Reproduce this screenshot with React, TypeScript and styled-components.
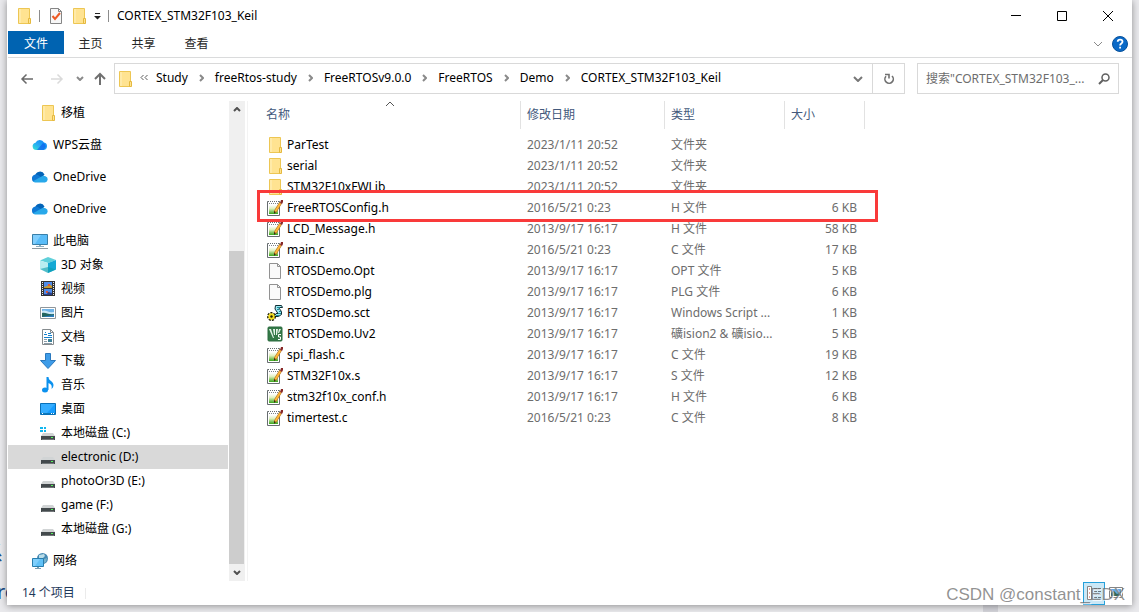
import React from "react";
import styled, { createGlobalStyle, css } from "styled-components";

const Global = createGlobalStyle`
  * { box-sizing: border-box; }
  body {
    margin: 0;
    background: #e9e9ec;
    font: 12px/20px "Noto Sans", "Noto Sans CJK SC", sans-serif;
    color: #000;
  }
  button, input { font: inherit; color: inherit; }
`;

const Desktop = styled.div`
  position: relative;
  min-height: 100vh;
  overflow: hidden;
  display: flex;
  flex-direction: column;
  padding: 0 7px 7px;
`;

const PageText = styled.span<{ $top: number; $left: number }>`
  position: absolute;
  top: ${(p) => p.$top}px;
  left: ${(p) => p.$left}px;
  font-size: 20px;
  line-height: 24px;
  color: #1b4d86;
`;

const PageBand = styled.span`
  position: absolute;
  right: 141px;
  bottom: 0;
  width: 15px;
  height: 20px;
  background: #d3d3d9;
`;

const Window = styled.main`
  position: relative;
  flex: 1;
  display: flex;
  flex-direction: column;
  background: #fff;
  border-left: 1px solid #fff;
  box-shadow: 0 1px 7px rgba(0, 0, 0, 0.4);
`;

const TitleBar = styled.header`
  display: flex;
  align-items: center;
  height: 31px;
  padding: 0 1px 0 8px;
`;

const QuickAccess = styled.div`
  display: flex;
  align-items: center;
  gap: 7px;
`;

const PlainButton = styled.button`
  display: flex;
  align-items: center;
  justify-content: center;
  padding: 0;
  border: 0;
  background: none;
`;

const Separator = styled.span`
  width: 1px;
  height: 12px;
  margin: 0 1px 0 0;
  background: #8c8c8c;
`;

const Title = styled.h1`
  margin: 0 0 0 7px;
  font-size: 12px;
  font-weight: 400;
`;

const Captions = styled.div`
  display: flex;
  margin-left: auto;
`;

const CaptionButton = styled(PlainButton)`
  width: 46px;
  height: 31px;
`;

const Ribbon = styled.nav`
  display: flex;
  align-items: flex-start;
  height: 27px;
  border-bottom: 1px solid #dadbdc;
`;

const Tab = styled(PlainButton)<{ $active?: boolean }>`
  width: ${(p) => (p.$active ? 56 : 53)}px;
  height: 23px;
  padding-top: 2px;
  color: ${(p) => (p.$active ? "#fff" : "#262626")};
  background: ${(p) => (p.$active ? "#0063b1" : "none")};
`;

const RibbonEnd = styled.div`
  display: flex;
  align-items: center;
  gap: 9px;
  height: 26px;
  margin-left: auto;
  padding-right: 4px;
`;

const AddressRow = styled.div`
  display: flex;
  align-items: center;
  padding: 5px 13px 0 4px;
`;

const History = styled.div`
  display: grid;
  grid-template-columns: 30px 30px 16px 24px;
`;

const AddressGroup = styled.div`
  display: flex;
  flex: 1;
  min-width: 0;
  margin: 0 12px 0 2px;
`;

const fieldBox = css`
  height: 31px;
  border: 1px solid #d9d9d9;
  background: #fff;
`;

const AddressBox = styled.div`
  ${fieldBox}
  display: flex;
  flex: 1;
  align-items: center;
  min-width: 0;
  padding: 0 9px 0 2px;
`;

const Crumbs = styled.ol`
  display: flex;
  flex: 1;
  align-items: center;
  margin: 0;
  padding: 0 0 2px 7px;
  list-style: none;
`;

const Crumb = styled.li`
  display: flex;
  align-items: center;
  & > svg { margin: 0 11px; }
`;

const Overflow = styled.li`
  margin-right: 8px;
  line-height: 0;
`;

const Refresh = styled(PlainButton)`
  ${fieldBox}
  width: 32px;
  border-left: 0;
`;

const SearchBox = styled.label`
  ${fieldBox}
  display: flex;
  align-items: center;
  width: 202px;
  padding: 0 8px;
`;

const SearchInput = styled.input`
  flex: 1;
  min-width: 0;
  padding: 0;
  border: 0;
  outline: 0;
  background: none;
  &::placeholder { color: #6d6d6d; opacity: 1; }
`;

const Body = styled.div`
  display: flex;
  flex: 1;
  padding-top: 7px;
`;

const Tree = styled.nav`
  width: 220px;
  flex: none;
`;

const TreeItem = styled.a<{ $root?: boolean; $selected?: boolean; $gap?: boolean }>`
  display: flex;
  align-items: center;
  gap: 5px;
  height: 24px;
  margin-top: ${(p) => (p.$gap ? 8 : 0)}px;
  padding-left: ${(p) => (p.$root ? 24 : 32)}px;
  background: ${(p) => (p.$selected ? "#d9d9d9" : "none")};
  color: #000;
  text-decoration: none;
`;

const ScrollTrack = styled.div`
  display: flex;
  flex-direction: column;
  width: 16px;
  margin-left: 1px;
  background: #f0f0f0;
`;

const ScrollButton = styled(PlainButton)`
  width: 15px;
  height: 17px;
`;

const Thumb = styled.div`
  flex: 1;
  width: 15px;
  margin-top: 133px;
  background: #cdcdcd;
`;

const FileArea = styled.section`
  flex: 1;
  margin-left: 2px;
  border-left: 1px solid #f3f3f3;
`;

const FileTable = styled.table`
  width: 617px;
  table-layout: fixed;
  border-collapse: separate;
  border-spacing: 0;
`;

const HeadCell = styled.th<{ $width: number; $first?: boolean }>`
  position: relative;
  width: ${(p) => p.$width}px;
  height: 28px;
  padding: 0 6px 0 ${(p) => (p.$first ? 18 : 6)}px;
  border-right: 1px solid #e2e2e2;
  color: #43597c;
  font-weight: 400;
  text-align: left;
`;

const SortMark = styled.span`
  position: absolute;
  top: 0;
  left: 137px;
  line-height: 0;
`;

const Cell = styled.td<{ $right?: boolean }>`
  height: 21px;
  padding: 0 ${(p) => (p.$right ? 8 : 6)}px 0 6px;
  color: #6d6d6d;
  line-height: 20px;
  white-space: nowrap;
  text-align: ${(p) => (p.$right ? "right" : "left")};
`;

const NameCell = styled(Cell)`
  position: relative;
  padding-left: 19px;
  color: #000;
`;

const FileName = styled.div`
  display: flex;
  align-items: center;
  gap: 4px;
`;

const Highlight = styled.span`
  position: absolute;
  z-index: 1;
  top: -7px;
  left: 9px;
  width: 621px;
  height: 32px;
  border: 3px solid #f93a3a;
  pointer-events: none;
`;

const Spacer = styled.tbody`
  height: 5px;
`;

const StatusBar = styled.footer`
  display: flex;
  align-items: center;
  height: 24px;
  padding: 0 5px 0 14px;
  color: #1e395b;
`;

const StatusDivider = styled.span`
  width: 1px;
  height: 11px;
  margin-left: 10px;
  background: #ebebeb;
`;

const ViewButtons = styled.div`
  display: flex;
  margin-left: auto;
`;

const ViewButton = styled(PlainButton)<{ $on?: boolean }>`
  width: 22px;
  height: 23px;
  border: ${(p) => (p.$on ? "1px solid #26a0da" : "0")};
  background: ${(p) => (p.$on ? "#cbe8f6" : "none")};
`;

const Watermark = styled.span`
  position: absolute;
  right: 7px;
  bottom: 0;
  font: 17px/20px "Liberation Sans", sans-serif;
  color: rgba(110, 110, 110, 0.75);
  text-shadow: 1px 1px 0 rgba(255, 255, 255, 0.8);
  pointer-events: none;
`;

function Svg({ children, size = 16 }: { children: React.ReactNode; size?: number }) {
  return (
    <svg width={size} height={size} viewBox={`0 0 ${size} ${size}`} fill="none" aria-hidden="true">
      {children}
    </svg>
  );
}

const FolderIcon = () => (
  <Svg>
    <path d="M2.500.5h11v15h-11z" fill="#ffe391" stroke="#edc653" />
    <path d="M3 1h2v14H3z" fill="#ffeaa8" />
    <path d="M12.500 10.500h2v5h-2z" fill="#ffe391" stroke="#e5b93f" />
  </Svg>
);

const CheckPageIcon = () => (
  <Svg>
    <path d="M2.500.5h8l3 3v12h-11z" fill="#f7f7f7" stroke="#858585" />
    <path d="M10.500.5v3h3" stroke="#858585" />
    <path d="M4.500 8l2.500 3 5-6" stroke="#ee5a24" strokeWidth="2" />
  </Svg>
);

const WpsIcon = () => (
  <Svg>
    <defs>
      <linearGradient id="wps" x1="0" y1="1" x2="1" y2="0">
        <stop offset="0" stopColor="#35e6d0" />
        <stop offset=".45" stopColor="#27a9f5" />
        <stop offset="1" stopColor="#0a80f4" />
      </linearGradient>
    </defs>
    <path d="M4.500 13A3.700 3.700 0 0 1 3.500 5.700 4.700 4.700 0 0 1 12 5.500a3.800 3.800 0 0 1-.5 7.500z" fill="url(#wps)" />
    <path d="M5 13l6-7a3.800 3.800 0 0 1 .5 7z" fill="#0b5ceb" opacity=".65" />
  </Svg>
);

const OneDriveIcon = () => (
  <Svg>
    <path d="M3 7A5 5 0 0 1 12.500 5.500L9 9.500z" fill="#0364b8" />
    <path d="M0 10A3.900 3.900 0 0 1 5.500 5.800L12 10l-9 3A3 3 0 0 1 0 10z" fill="#0f78d4" />
    <path d="M1 12.200L9.500 7.500A3.400 3.400 0 0 1 13.500 7.300 3.200 3.200 0 0 1 13 13.500H3a3 3 0 0 1-2-1.300z" fill="#28a8ea" />
  </Svg>
);

const MonitorIcon = () => (
  <Svg>
    <path d="M.5 1.500h15v10H.5z" fill="#59bcf8" stroke="#397fa8" />
    <path d="M1 2h8L3 11H1z" fill="#91d6ff" opacity=".7" />
    <path d="M7 12h2v1H7zM4 13h8v1H4z" fill="#8caebf" />
    <path d="M0 15h16v1H0z" fill="#8f9ba2" />
  </Svg>
);

const CubeIcon = () => (
  <Svg>
    <path d="M0 3.500L8 0l8 3-8 3z" fill="#5fd0da" />
    <path d="M0 3.500L8 6v10l-8-4z" fill="#b9edf0" />
    <path d="M8 6l8-3v9.500L8 16z" fill="#15a9d4" />
    <path d="M0 12l8-2 8 2.500L8 16z" fill="#0c9dad" opacity=".6" />
  </Svg>
);

const VideoIcon = () => (
  <Svg>
    <path d="M1 0h14v15H1z" fill="#333" />
    <path d="M2.500 1v14M13.500 1v14" stroke="#eee" strokeDasharray="1 1" />
    <path d="M4 1h8v6H4z" fill="#4f8bea" />
    <path d="M4 8h8v6H4z" fill="#4f8bea" />
    <path d="M4 6l3-1 2-2 3 2v2H4z" fill="#c99a2b" />
    <path d="M8 3h2v2H8zM6 10h2v1h2v1H6z" fill="#dc5936" />
    <path d="M4 13h3l1-2 4 1v2H4z" fill="#27408c" />
  </Svg>
);

const PictureIcon = () => (
  <Svg>
    <path d="M.5 2.500h15v11H.5z" fill="#fff" stroke="#8f969b" />
    <path d="M2 4h12v8H2z" fill="#6fb3e7" />
    <path d="M2 6c4-2 5 2 12 1v2H2z" fill="#cce8f7" />
    <path d="M2 8c4-1 6 2 12 1v3H2z" fill="#23655f" />
    <path d="M7 11l7-1v2H2z" fill="#2b7dbd" />
  </Svg>
);

const DocumentIcon = () => (
  <Svg>
    <path d="M2.500.5h8l3 3v12h-11z" fill="#fff" stroke="#858b8e" />
    <path d="M10.500.5v3h3" stroke="#858b8e" />
    <path d="M4 5.500h3M5 3.500h1M8 4.500h3M8 6.500h4M4 8.500h8" stroke="#1481cd" />
    <path d="M4 10.500h3M4 12.500h3M4 14.500h8" stroke="#8c9ca8" />
    <path d="M8 10h4v3H8z" fill="#3b8199" />
  </Svg>
);

const DownloadIcon = () => (
  <Svg>
    <path d="M5.500.5h5v7h5L8 15.500.500 7.500h5z" fill="#3e9ce8" stroke="#2a78bd" />
  </Svg>
);

const MusicIcon = () => (
  <Svg>
    <ellipse cx="5" cy="13" rx="3" ry="2.500" fill="#0b91ee" />
    <path d="M6.500 0h2c0 4 5 4 5 8 0 2-1 3-2 4 1-4-1-5-3-6v7h-2z" fill="#0b91ee" />
  </Svg>
);

const DesktopIcon = () => (
  <Svg>
    <path d="M.5 2.500h15v11H.5z" fill="#169cff" stroke="#0870b8" />
    <path d="M1 3h14L7 12H1z" fill="#35adff" />
    <path d="M1 12h14v1H1z" fill="#0d78ba" />
    <path d="M2 12.500h1M11 12.500h1M13 12.500h1" stroke="#fff" />
  </Svg>
);

const DriveIcon = ({ system }: { system?: boolean }) => (
  <Svg>
    <path d="M3 8h10l2 3H1z" fill="#d1d4d5" />
    <path d="M1 11h14v4H1z" fill="#43494c" />
    <path d="M2 14h12v1H2z" fill="#727779" />
    <path d="M11 12h2v1h-2z" fill="#54f45b" />
    {system && <path d="M0 2h3v2H0zM4 2h2v2H4zM0 5h3v2H0zM4 5h2v2H4z" fill="#10b7ef" />}
  </Svg>
);

const NetworkIcon = () => (
  <Svg>
    <circle cx="10.500" cy="5.500" r="5.500" fill="#4589b3" />
    <path d="M7 2c2 0 3-1 5-1l1 2-3 3-3-1z" fill="#b9dce8" />
    <path d="M12 6l3-1-1 4-2 1z" fill="#76b2ca" />
    <path d="M.500 5.500h11v8H.500z" fill="#61c1f7" stroke="#287eae" />
    <path d="M1 6h7l-5 7H1z" fill="#92d8ff" opacity=".6" />
    <path d="M5 14h2v1H5zM3 15h6v1H3z" fill="#7a9eb1" />
  </Svg>
);

const NotepadIcon = () => (
  <Svg>
    <defs>
      <linearGradient id="note" x1="0" y1="0" x2="0" y2="1">
        <stop offset="0" stopColor="#fff" />
        <stop offset=".4" stopColor="#dff0bd" />
        <stop offset="1" stopColor="#39a51b" />
      </linearGradient>
    </defs>
    <path d="M.5 1.500h12v14H.5z" fill="#fff" stroke="#666c6f" />
    <path d="M2 5h9v9H2z" fill="url(#note)" />
    <path d="M2 1.500h10" stroke="#fff" strokeDasharray="1 1" />
    <path d="M2 3.500h9" stroke="#7b8488" strokeDasharray="1 1" />
    <path d="M13.500 3L8 12" stroke="#a8691c" strokeWidth="3" />
    <path d="M13.500 3L8 12" stroke="#ffb83a" strokeWidth="2" />
    <path d="M7 11l2 1-2 2z" fill="#3b2b13" />
    <path d="M14 0h2v2l-1 2-2-1z" fill="#872726" />
  </Svg>
);

const BlankIcon = () => (
  <Svg>
    <path d="M2.500.5h8l3 3v12h-11z" fill="#fafafa" stroke="#929292" />
    <path d="M10.500.5v3h3" stroke="#929292" />
  </Svg>
);

const ScriptIcon = () => (
  <Svg>
    <path d="M8.500.500h6l1 2h-4l3 4v3l-3 2H7l2-3h2L8 4z" fill="#9eeaf2" stroke="#102d35" />
    <path d="M10 2.500h3M10 4.500h2M12 6.500h2M11 8.500h3M9 10.500h3" stroke="#1c8a99" />
    <circle cx="4.500" cy="11.500" r="3.500" stroke="#151500" strokeWidth="2" strokeDasharray="2 1" />
    <circle cx="4.500" cy="11.500" r="3.200" fill="#f6df20" />
    <circle cx="4.500" cy="11.500" r="1.200" fill="#252300" />
  </Svg>
);

const VisionIcon = () => (
  <Svg>
    <rect x="1" y="1" width="14" height="14" rx="1" fill="#347a48" stroke="#2b6b3e" />
    <path d="M2 3h2l3 9H6zM6 3h2v6H7zM9 3h2l-1 6H9zM12 3h2l-2 4h-1z" fill="#e4f3e8" />
    <path d="M14 8.500h-2.500v2.500h2v2.500H11" stroke="#fff" />
  </Svg>
);

function Chevron({ dir, color = "#6b6b6b", wide = 8, weight = 1 }: { dir: "up" | "down" | "right"; color?: string; wide?: number; weight?: number }) {
  const half = wide / 2;
  const d = {
    up: `M1 ${half + 1}l${half}-${half} ${half} ${half}`,
    down: `M1 1l${half} ${half} ${half}-${half}`,
    right: `M1 1l${half} ${half}-${half} ${half}`,
  }[dir];
  const across = wide + 2;
  const deep = half + 2;
  return (
    <svg width={dir === "right" ? deep : across} height={dir === "right" ? across : deep} fill="none" stroke={color} strokeWidth={weight} aria-hidden="true">
      <path d={d} />
    </svg>
  );
}

const crumbs = ["Study", "freeRtos-study", "FreeRTOSv9.0.0", "FreeRTOS", "Demo", "CORTEX_STM32F103_Keil"];

const places: { label: string; icon: React.ReactNode; root?: boolean; gap?: boolean; selected?: boolean }[] = [
  { label: "移植", icon: <FolderIcon /> },
  { label: "WPS云盘", icon: <WpsIcon />, root: true, gap: true },
  { label: "OneDrive", icon: <OneDriveIcon />, root: true, gap: true },
  { label: "OneDrive", icon: <OneDriveIcon />, root: true, gap: true },
  { label: "此电脑", icon: <MonitorIcon />, root: true, gap: true },
  { label: "3D 对象", icon: <CubeIcon /> },
  { label: "视频", icon: <VideoIcon /> },
  { label: "图片", icon: <PictureIcon /> },
  { label: "文档", icon: <DocumentIcon /> },
  { label: "下载", icon: <DownloadIcon /> },
  { label: "音乐", icon: <MusicIcon /> },
  { label: "桌面", icon: <DesktopIcon /> },
  { label: "本地磁盘 (C:)", icon: <DriveIcon system /> },
  { label: "electronic (D:)", icon: <DriveIcon />, selected: true },
  { label: "photoOr3D (E:)", icon: <DriveIcon /> },
  { label: "game (F:)", icon: <DriveIcon /> },
  { label: "本地磁盘 (G:)", icon: <DriveIcon /> },
  { label: "网络", icon: <NetworkIcon />, root: true, gap: true },
];

const icons = {
  folder: <FolderIcon />,
  note: <NotepadIcon />,
  blank: <BlankIcon />,
  script: <ScriptIcon />,
  vision: <VisionIcon />,
};

const files: [keyof typeof icons, string, string, string, string][] = [
  ["folder", "ParTest", "2023/1/11 20:52", "文件夹", ""],
  ["folder", "serial", "2023/1/11 20:52", "文件夹", ""],
  ["folder", "STM32F10xFWLib", "2023/1/11 20:52", "文件夹", ""],
  ["note", "FreeRTOSConfig.h", "2016/5/21 0:23", "H 文件", "6 KB"],
  ["note", "LCD_Message.h", "2013/9/17 16:17", "H 文件", "58 KB"],
  ["note", "main.c", "2016/5/21 0:23", "C 文件", "17 KB"],
  ["blank", "RTOSDemo.Opt", "2013/9/17 16:17", "OPT 文件", "5 KB"],
  ["blank", "RTOSDemo.plg", "2013/9/17 16:17", "PLG 文件", "6 KB"],
  ["script", "RTOSDemo.sct", "2013/9/17 16:17", "Windows Script ...", "1 KB"],
  ["vision", "RTOSDemo.Uv2", "2013/9/17 16:17", "礦ision2 & 礦isio...", "5 KB"],
  ["note", "spi_flash.c", "2013/9/17 16:17", "C 文件", "19 KB"],
  ["note", "STM32F10x.s", "2013/9/17 16:17", "S 文件", "12 KB"],
  ["note", "stm32f10x_conf.h", "2013/9/17 16:17", "H 文件", "6 KB"],
  ["note", "timertest.c", "2016/5/21 0:23", "C 文件", "8 KB"],
];

export default function App() {
  return (
    <Desktop>
      <Global />
      <PageText $top={542} $left={-17} aria-hidden="true">系</PageText>
      <PageText $top={580} $left={-3} aria-hidden="true">re</PageText>
      <PageBand />
      <Window>
        <TitleBar>
          <QuickAccess>
            <FolderIcon />
            <Separator />
            <PlainButton aria-label="属性"><CheckPageIcon /></PlainButton>
            <PlainButton aria-label="新建文件夹"><FolderIcon /></PlainButton>
            <PlainButton aria-label="自定义快速访问工具栏">
              <svg width="7" height="8" aria-hidden="true">
                <path d="M1 1h5v1H1zM0 4h7L3.500 7.500z" fill="#222" />
              </svg>
            </PlainButton>
            <Separator />
          </QuickAccess>
          <Title>CORTEX_STM32F103_Keil</Title>
          <Captions>
            <CaptionButton aria-label="最小化">
              <Svg size={12}><path d="M1 5.500h10" stroke="#000" /></Svg>
            </CaptionButton>
            <CaptionButton aria-label="最大化">
              <Svg size={12}><path d="M1.500 1.500h9v9h-9z" stroke="#000" /></Svg>
            </CaptionButton>
            <CaptionButton aria-label="关闭">
              <Svg size={12}><path d="M1 1l10 10M11 1L1 11" stroke="#000" /></Svg>
            </CaptionButton>
          </Captions>
        </TitleBar>

        <Ribbon>
          <Tab $active>文件</Tab>
          <Tab>主页</Tab>
          <Tab>共享</Tab>
          <Tab>查看</Tab>
          <RibbonEnd>
            <PlainButton aria-label="展开功能区"><Chevron dir="down" color="#8a8a8a" /></PlainButton>
            <PlainButton aria-label="帮助">
              <Svg>
                <circle cx="8" cy="8" r="7.500" fill="#0a69c7" stroke="#07519b" />
                <path d="M5.700 5.800C5.700 3 10.500 3 10.500 5.800c0 1.800-2.400 1.700-2.400 3.700" stroke="#fff" strokeWidth="1.800" />
                <path d="M7.200 10.800h1.800v1.800H7.200z" fill="#fff" />
              </Svg>
            </PlainButton>
          </RibbonEnd>
        </Ribbon>

        <AddressRow>
          <History>
            <PlainButton aria-label="后退">
              <Svg><path d="M14 8H3M7.500 3.500L3 8l4.500 4.500" stroke="#6a6a6a" strokeWidth="1.500" /></Svg>
            </PlainButton>
            <PlainButton aria-label="前进">
              <Svg><path d="M2 8h11M8.500 3.500L13 8l-4.500 4.500" stroke="#dadada" strokeWidth="1.500" /></Svg>
            </PlainButton>
            <PlainButton aria-label="最近浏览的位置"><Chevron dir="down" wide={6} weight={2} color="#8a8a8a" /></PlainButton>
            <PlainButton aria-label="上移">
              <Svg><path d="M8 14V3M3 8l5-5 5 5" stroke="#707070" strokeWidth="2" /></Svg>
            </PlainButton>
          </History>
          <AddressGroup>
            <AddressBox>
              <FolderIcon />
              <Crumbs>
                <Overflow>
                  <svg width="8" height="7" fill="none" stroke="#5b5b5b" aria-hidden="true">
                    <path d="M3.500 1L1 3.500 3.500 6M7.500 1L5 3.500 7.500 6" />
                  </svg>
                </Overflow>
                {crumbs.map((name, i) => (
                  <Crumb key={name}>
                    <PlainButton>{name}</PlainButton>
                    {i < crumbs.length - 1 && <Chevron dir="right" wide={6} weight={2} color="#8a8a8a" />}
                  </Crumb>
                ))}
              </Crumbs>
              <PlainButton aria-label="以前的位置"><Chevron dir="down" weight={2} color="#777" /></PlainButton>
            </AddressBox>
            <Refresh aria-label="刷新">
              <Svg>
                <path d="M11 5A4.200 4.200 0 1 1 5 5.200" stroke="#707070" strokeWidth="1.600" />
                <path d="M4 3.500h4v4" stroke="#707070" strokeWidth="1.600" />
              </Svg>
            </Refresh>
          </AddressGroup>
          <SearchBox>
            <SearchInput type="text" aria-label="搜索" placeholder={'搜索"CORTEX_STM32F103_...'} />
            <Svg size={12}>
              <circle cx="7.500" cy="4.500" r="3.500" stroke="#606060" strokeWidth="1.500" />
              <path d="M5 7L1 11" stroke="#606060" strokeWidth="2" />
            </Svg>
          </SearchBox>
        </AddressRow>

        <Body>
          <Tree>
            {places.map((p, i) => (
              <TreeItem key={i} href="#" $root={p.root} $gap={p.gap} $selected={p.selected}>
                {p.icon}
                {p.label}
              </TreeItem>
            ))}
          </Tree>
          <ScrollTrack>
            <ScrollButton aria-label="向上滚动"><Chevron dir="up" wide={6} weight={2} color="#505050" /></ScrollButton>
            <Thumb />
            <ScrollButton aria-label="向下滚动"><Chevron dir="down" wide={6} weight={2} color="#505050" /></ScrollButton>
          </ScrollTrack>
          <FileArea>
            <FileTable>
              <thead>
                <tr>
                  <HeadCell $width={273} $first>
                    名称
                    <SortMark><Chevron dir="up" color="#555" /></SortMark>
                  </HeadCell>
                  <HeadCell $width={144}>修改日期</HeadCell>
                  <HeadCell $width={120}>类型</HeadCell>
                  <HeadCell $width={80}>大小</HeadCell>
                </tr>
              </thead>
              <Spacer><tr><td colSpan={4} /></tr></Spacer>
              <tbody>
                {files.map(([icon, name, date, type, size]) => (
                  <tr key={name}>
                    <NameCell>
                      <FileName>{icons[icon]}{name}</FileName>
                      {name === "FreeRTOSConfig.h" && <Highlight />}
                    </NameCell>
                    <Cell>{date}</Cell>
                    <Cell>{type}</Cell>
                    <Cell $right>{size}</Cell>
                  </tr>
                ))}
              </tbody>
            </FileTable>
          </FileArea>
        </Body>

        <StatusBar>
          14 个项目
          <StatusDivider />
          <ViewButtons>
            <ViewButton $on aria-label="详细信息">
              <Svg>
                <path d="M1.500 1.500h4v13h-4z" fill="#fff" stroke="#858585" />
                <path d="M3 4h1M3 8h1M3 12h1" stroke="#d34b35" />
                <path d="M8 3.500h3M12 3.500h3M8 6.500h3M12 6.500h3M8 9.500h3M12 9.500h3M8 12.500h3M12 12.500h3" stroke="#687780" />
              </Svg>
            </ViewButton>
            <ViewButton aria-label="大图标">
              <Svg>
                <path d="M1.500 2.500h13v10h-13z" fill="#fff" stroke="#858585" />
                <path d="M3 4h10v7H3z" fill="#64a8e4" />
                <path d="M3 8l3-2 3 3 4-2v4H3z" fill="#34695d" />
              </Svg>
            </ViewButton>
          </ViewButtons>
          <Watermark>CSDN @constant_EDX</Watermark>
        </StatusBar>
      </Window>
    </Desktop>
  );
}
